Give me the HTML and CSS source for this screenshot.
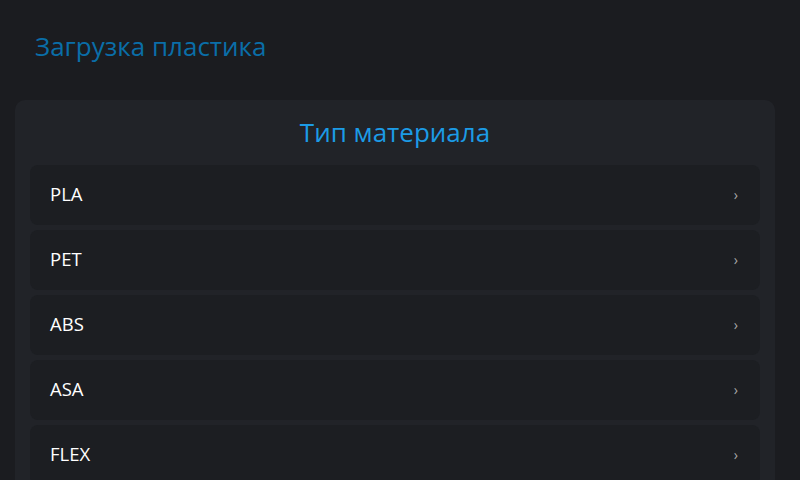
FILE: index.html
```html
<!DOCTYPE html>
<html lang="ru">
<head>
<meta charset="utf-8">
<link rel="stylesheet" href="styles.css">
</head>
<body>
<div class="screen">
  <header class="topbar">Загрузка пластика</header>
  <section class="card">
    <h2 class="card-title">Тип материала</h2>
    <ul class="list">
      <li class="item"><span>PLA</span><span class="chev">›</span></li>
      <li class="item"><span>PET</span><span class="chev">›</span></li>
      <li class="item"><span>ABS</span><span class="chev">›</span></li>
      <li class="item"><span>ASA</span><span class="chev">›</span></li>
      <li class="item"><span>FLEX</span><span class="chev">›</span></li>
    </ul>
  </section>
</div>
</body>
</html>
```
FILE: styles.css
```css
html, body {
  margin: 0;
  padding: 0;
  background: #1b1c20;
  width: 800px;
  height: 480px;
  overflow: hidden;
  font-family: "Open Sans", "Noto Sans", sans-serif;
}
.screen {
  display: flex;
  flex-direction: column;
  padding: 0 25px 0 15px;
}
.topbar {
  height: 100px;
  display: flex;
  align-items: center;
  padding: 0 0 8px 20px;
  box-sizing: border-box;
  font-size: 26px;
  color: #0a6ea8;
}
.card {
  background: #212328;
  border-radius: 10px;
  padding: 0 15px 15px;
}
.card-title {
  margin: 0;
  height: 65px;
  display: flex;
  align-items: center;
  justify-content: center;
  font-weight: normal;
  font-size: 26px;
  color: #1c9be6;
  padding-bottom: 2px;
  box-sizing: border-box;
}
.list {
  list-style: none;
  margin: 0;
  padding: 0;
  display: flex;
  flex-direction: column;
  gap: 5px;
}
.item {
  height: 60px;
  box-sizing: border-box;
  background: #1c1e22;
  border-radius: 8px;
  display: flex;
  align-items: center;
  justify-content: space-between;
  padding: 0 20px 3px;
  font-size: 18.5px;
  color: #ffffff;
}
.chev {
  color: #a8a8a8;
  font-size: 14px;
  margin-right: 2px;
  padding-top: 2px;
}
```
